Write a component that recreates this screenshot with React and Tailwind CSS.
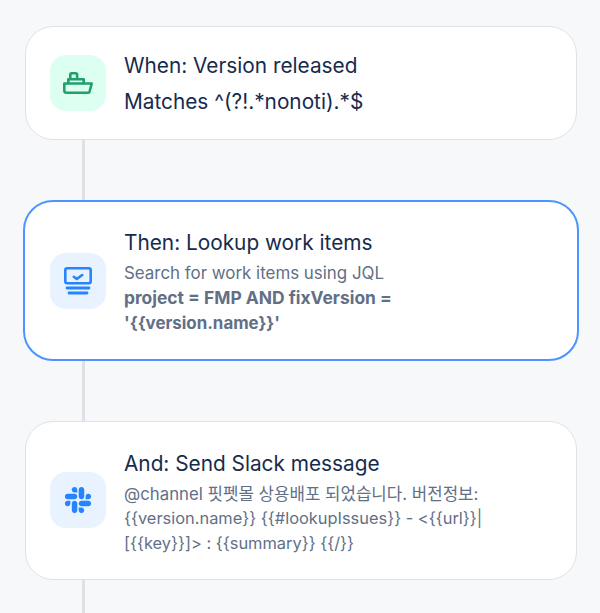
import { FaSlack } from "react-icons/fa";

const ShipIcon = () => (
  <svg width="30" height="22" viewBox="0 0 30 22" fill="none" stroke="#22a06b" strokeWidth="2.6" strokeLinejoin="round" strokeLinecap="round">
    <path d="M1.3 11.5h27.4l-2 7.8c-.1.9-.6 1.4-1.5 1.4H3.5c-1.400 0-2.200-.8-2.200-2.200v-7z" />
    <path d="M5.300 11V7.300h15.400V11" />
    <path d="M7.300 7V2.800c0-.9.500-1.500 1.400-1.500h4c.9 0 1.400.6 1.400 1.500V7" />
  </svg>
);

const ScreenIcon = () => (
  <svg width="28" height="28" viewBox="0 0 28 28" fill="none">
    <rect x="1.300" y="1.300" width="25.400" height="15" rx="2" stroke="#2684ff" strokeWidth="2.600" />
    <path d="M9.800 9.800l3 2.200 5.400-4" stroke="#2684ff" strokeWidth="2.600" strokeLinecap="round" strokeLinejoin="round" />
    <path d="M3 21h22M5 26h18" stroke="#2684ff" strokeWidth="2.800" strokeLinecap="round" />
  </svg>
);

const Step = ({ icon, tint, title, active, pad, textPad = "", children }) => (
  <div
    className={
      active
        ? `-mx-0.5 flex items-center gap-[18px] rounded-[30px] border-2 border-[#4c94ff] bg-white pr-6 pl-[25px] ${pad}`
        : `flex items-center gap-[18px] rounded-[28px] border border-[#dfe1e6] bg-white pr-6 pl-6 ${pad}`
    }
  >
    <div className={`flex h-14 w-14 shrink-0 items-center justify-center rounded-2xl ${tint}`}>{icon}</div>
    <div className={`min-w-0 flex-1 ${textPad}`}>
      <div className="text-[20.8px] leading-9 text-[#172b4d]">{title}</div>
      {children}
    </div>
  </div>
);

const Connector = ({ h }) => <div className={`ml-[57px] w-[3px] bg-[#dfe1e6] ${h}`} />;

export default function App() {
  return (
    <div
      className="h-[613px] overflow-hidden bg-[#f7f8f9] pt-[26px] pr-[23px] pl-[25px]"
      style={{ fontFamily: 'Inter, "Noto Sans CJK KR", sans-serif' }}
    >
      <Step icon={<ShipIcon />} tint="bg-[#dcfff1]" title="When: Version released" pad="py-[19px]" textPad="pt-0.5">
        <div className="text-[20.8px] leading-9 text-[#172b4d]">Matches ^(?!.*nonoti).*$</div>
      </Step>
      <Connector h="h-[60px]" />
      <Step icon={<ScreenIcon />} tint="bg-[#e9f2ff]" title="Then: Lookup work items" active pad="py-[23px]">
        <div className="max-w-[380px] text-[16.9px] leading-[25px] text-[#626f86]">
          <div>Search for work items using JQL</div>
          <div className="font-bold">
            <div className="text-[17.4px] leading-6">project = FMP AND fixVersion =</div>
            <div className="leading-[26px]">{"'{{version.name}}'"}</div>
          </div>
        </div>
      </Step>
      <Connector h="h-[60px]" />
      <Step icon={<FaSlack size={30} color="#2684ff" />} tint="bg-[#e9f2ff]" title="And: Send Slack message" pad="py-[23.5px]">
        <div className="max-w-[380px] text-[16.8px] leading-[24.5px] text-[#626f86]">
          @channel 핏펫몰 상용배포 되었습니다. 버전정보:{" "}
          <span className="text-[16.4px] leading-[20px]">{"{{version.name}} {{#lookupIssues}} - <{{url}}|[{{key}}]> : {{summary}} {{/}}"}</span>
        </div>
      </Step>
      <Connector h="h-[60px]" />
    </div>
  );
}
